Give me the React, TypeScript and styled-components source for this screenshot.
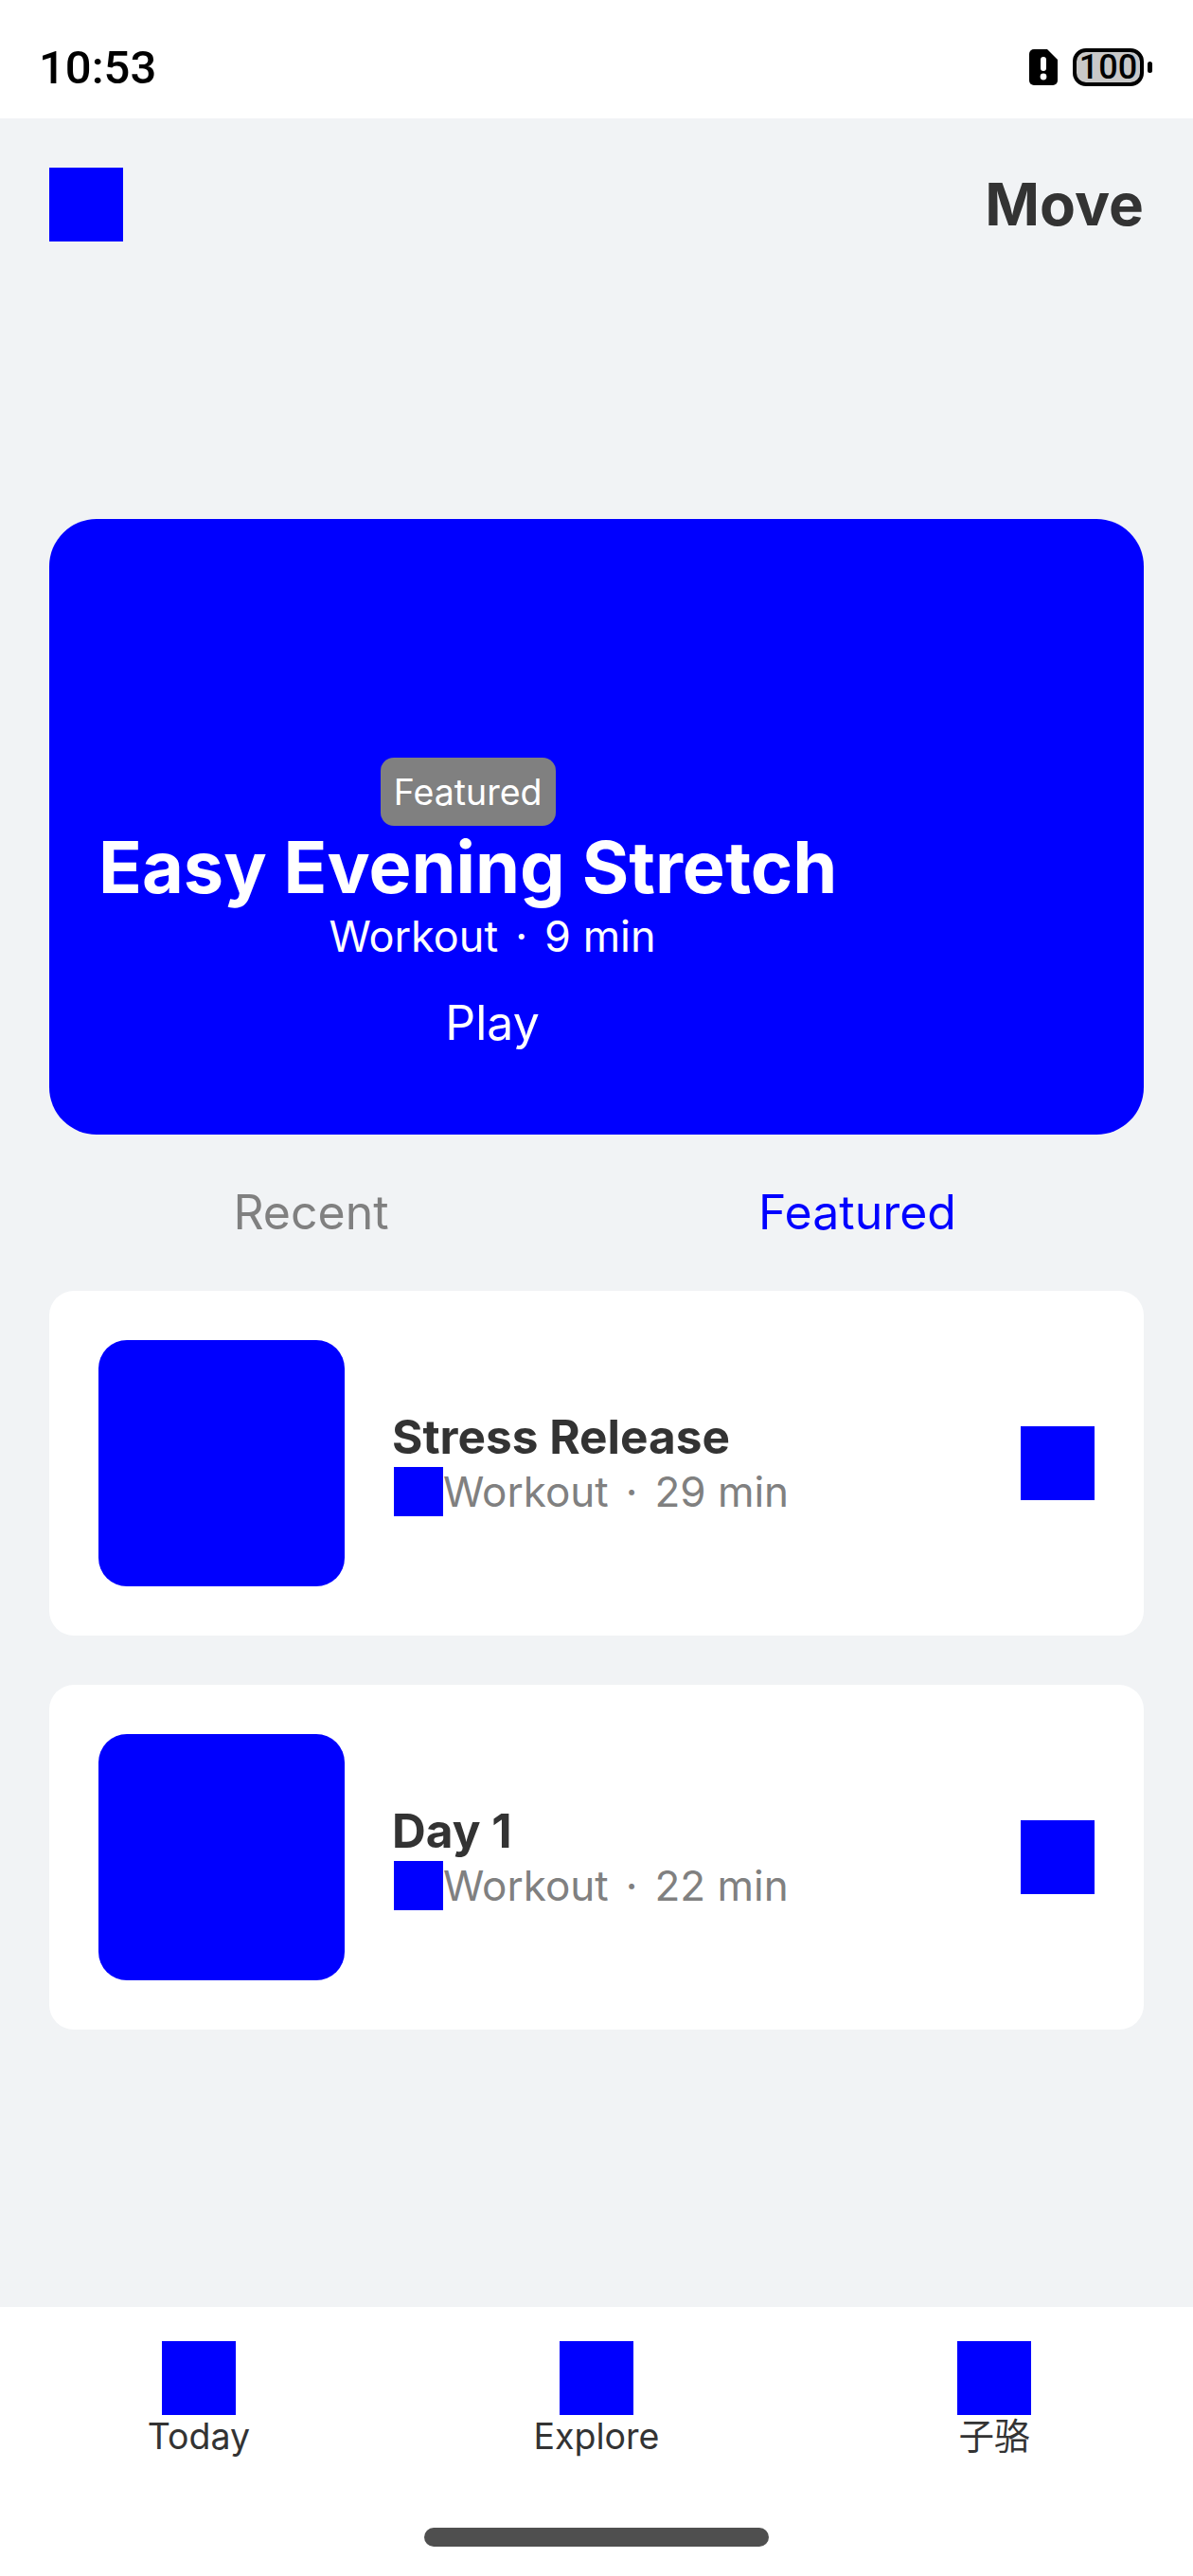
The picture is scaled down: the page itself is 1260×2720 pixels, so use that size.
import React from "react";
import styled, { createGlobalStyle } from "styled-components";

const GlobalStyle = createGlobalStyle`
  html, body { margin: 0; padding: 0; background: #fff; }
  * { box-sizing: border-box; }
`;
const FONT = `Inter, "Noto Sans CJK SC", sans-serif`;
const BLUE = "#0000ff";

const Screen = styled.div`
  width: 1260px; height: 2720px; display: flex; flex-direction: column;
  font-family: ${FONT}; background: #f1f3f5;
`;
const StatusBar = styled.div`
  height: 125px; background: #fff; padding: 17px 52px 0 41px; display: flex;
  align-items: center; justify-content: space-between;
`;
const Clock = styled.div`
  font: 500 49px/1 Roboto, "Liberation Sans", sans-serif; color: #000;
`;
const StatusIcons = styled.div`display: flex; align-items: center;`;
const Battery = styled.div`
  position: relative; width: 75px; height: 40px; margin-left: 16px; border: 4px solid #000;
  border-radius: 14px; background: #c8c8c8; display: flex; align-items: center; justify-content: center;
  font: 500 36px/1 Roboto, "Liberation Sans", sans-serif; color: #000;
  &::after { content: ""; position: absolute; right: -13px; top: 10px; width: 5px; height: 12px; border-radius: 3px; background: #000; }
`;
const Main = styled.main`flex: 1; display: flex; flex-direction: column; padding: 52px 52px 0;`;
const Header = styled.header`display: flex; justify-content: space-between; align-items: center; height: 78px;`;
const Square = styled.div<{ $size: number }>`
  width: ${p => p.$size}px; height: ${p => p.$size}px; background: ${BLUE}; flex: none;
`;
const Brand = styled.h1`margin: 0; font-size: 62px; line-height: 78px; font-weight: 700; color: #333;`;
const Hero = styled.section`
  margin-top: 293px; height: 650px; border-radius: 50px; background: ${BLUE}; padding: 252px 0 0 52px; color: #fff;
`;
const HeroColumn = styled.div`width: 832px; display: flex; flex-direction: column; align-items: center;`;
const TitleGroup = styled.div`align-self: flex-start; display: flex; flex-direction: column; align-items: center;`;
const Badge = styled.div`
  width: 185px; height: 72px; border-radius: 14px; background: #808080; display: flex; align-items: center; justify-content: center;
  font-size: 37.5px; color: #fff;
`;
const HeroTitle = styled.h2`
  margin: -3px 0 0; font-size: 75.6px; line-height: 94px; font-weight: 700; white-space: nowrap;
`;
const HeroMeta = styled.div`font-size: 45px; line-height: 52px; display: flex; white-space: pre;`;
const Dot = styled.span`margin: 0 18px;`;
const Play = styled.div`font-size: 50px; line-height: 60px; margin-top: 35px;`;
const Tabs = styled.div`
  margin: 50px 0 0 -12px; display: grid; grid-template-columns: 577px 577px; height: 64px; align-items: center;
`;
const Tab = styled.div<{ $active?: boolean }>`
  text-align: center; font-size: 50px; line-height: 64px; color: ${p => (p.$active ? BLUE : "#808080")};
`;
const List = styled.div`margin-top: 51px; display: flex; flex-direction: column; gap: 52px;`;
const Card = styled.article`
  height: 364px; background: #fff; border-radius: 26px; padding: 52px; display: flex; align-items: center;
`;
const Thumb = styled.div`width: 260px; height: 260px; border-radius: 30px; background: ${BLUE}; flex: none;`;
const CardBody = styled.div`flex: 1; margin-left: 52px; display: flex; flex-direction: column; align-items: flex-start;`;
const CardTitle = styled.h3`margin: -2px 0 2px -2px; font-size: 49.5px; line-height: 60px; font-weight: 700; color: #333;`;
const CardMeta = styled.div`display: flex; align-items: center; font-size: 44px; color: #808080; white-space: pre; line-height: 52px;`;
const BottomNav = styled.nav`
  height: 284px; background: #fff; padding-top: 36px; display: flex; flex-direction: column; align-items: center;
`;
const NavRow = styled.div`width: 100%; display: grid; grid-template-columns: repeat(3, 420px);`;
const NavItem = styled.div`
  display: flex; flex-direction: column; align-items: center; color: #333; font-size: 37.5px; line-height: 46px;
`;
const HomeBar = styled.div`width: 364px; height: 20px; border-radius: 10px; background: #4f4f4f; margin-top: 73px;`;

const AlertIcon = () => (
  <svg width="30" height="38" viewBox="0 0 30 38">
    <path d="M5 0H19L30 11V33a5 5 0 0 1-5 5H5a5 5 0 0 1-5-5V5a5 5 0 0 1 5-5Z" fill="#000" />
    <rect x="12" y="8" width="6" height="15" rx="3" fill="#fff" />
    <circle cx="15" cy="29" r="3.4" fill="#fff" />
  </svg>
);

const Meta = ({ duration }: { duration: string }) => (
  <>
    <span>Workout</span>
    <Dot>·</Dot>
    <span>{duration}</span>
  </>
);

const items = [
  { title: "Stress Release", duration: "29 min" },
  { title: "Day 1", duration: "22 min" },
];

export default function App() {
  return (
    <>
      <GlobalStyle />
      <Screen>
        <StatusBar>
          <Clock>10:53</Clock>
          <StatusIcons>
            <AlertIcon />
            <Battery>100</Battery>
          </StatusIcons>
        </StatusBar>
        <Main>
          <Header>
            <Square $size={78} />
            <Brand>Move</Brand>
          </Header>
          <Hero>
            <HeroColumn>
              <TitleGroup>
                <Badge>Featured</Badge>
                <HeroTitle>Easy Evening Stretch</HeroTitle>
              </TitleGroup>
              <HeroMeta>
                <Meta duration="9 min" />
              </HeroMeta>
              <Play>Play</Play>
            </HeroColumn>
          </Hero>
          <Tabs>
            <Tab>Recent</Tab>
            <Tab $active>Featured</Tab>
          </Tabs>
          <List>
            {items.map(item => (
              <Card key={item.title}>
                <Thumb />
                <CardBody>
                  <CardTitle>{item.title}</CardTitle>
                  <CardMeta>
                    <Square $size={52} />
                    <Meta duration={item.duration} />
                  </CardMeta>
                </CardBody>
                <Square $size={78} />
              </Card>
            ))}
          </List>
        </Main>
        <BottomNav>
          <NavRow>
            {["Today", "Explore", "子骆"].map(label => (
              <NavItem key={label}>
                <Square $size={78} />
                {label}
              </NavItem>
            ))}
          </NavRow>
          <HomeBar />
        </BottomNav>
      </Screen>
    </>
  );
}
